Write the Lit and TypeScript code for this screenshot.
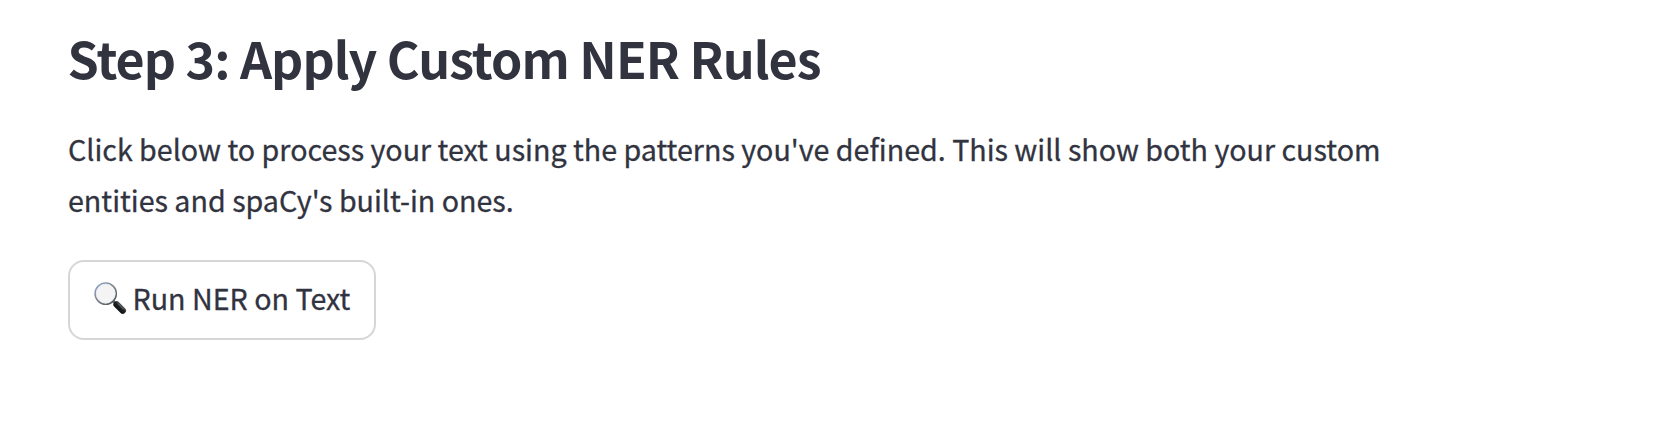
import { LitElement, html, css } from "lit";
import { customElement } from "lit/decorators.js";

@customElement("app-root")
class AppRoot extends LitElement {
  static styles = css`
    :host {
      display: block;
      box-sizing: border-box;
      height: 434px;
      padding: 21px 68px 0;
      background: #fff;
      color: #31333f;
      font-family: "Noto Sans CJK SC", sans-serif;
    }
    .title {
      margin: 0 0 0 -0.4px;
      font-size: 50.14px;
      font-weight: 700;
      line-height: 72px;
      letter-spacing: -0.95px;
      white-space: nowrap;
    }
    .intro {
      margin: 30px 0 0;
      font-size: 28.65px;
      line-height: 51px;
      white-space: nowrap;
      font-variant-ligatures: none;
      -webkit-text-stroke: 0.3px #31333f;
    }
    .run {
      display: flex;
      align-items: center;
      box-sizing: border-box;
      width: 308px;
      height: 80px;
      margin: 35px 0 0;
      padding: 0 24px 6px;
      border: 2px solid #d6d6d9;
      border-radius: 16px;
      background: #fff;
      color: inherit;
      font: 28.65px "Noto Sans CJK SC", sans-serif;
      -webkit-text-stroke: 0.3px #31333f;
      white-space: nowrap;
    }
    .icon {
      flex: none;
      width: 40px;
      height: 40px;
      margin: 2px 2.5px 0 -4px;
    }
  `;
  render() {
    return html`<h2 class="title">Step 3: Apply Custom NER Rules</h2>
      <p class="intro">Click below to process your text using the patterns you've defined. This will show both your custom<br />entities and spaCy's built-in ones.</p>
      <button class="run">
        <svg class="icon" viewBox="0 0 40 40" fill="none" aria-hidden="true">
          <defs>
            <linearGradient id="rim" x1="6" y1="5" x2="24" y2="26" gradientUnits="userSpaceOnUse">
              <stop stop-color="#8fa9cc" />
              <stop offset="0.5" stop-color="#7d838c" />
              <stop offset="1" stop-color="#50545a" />
            </linearGradient>
            <linearGradient id="grip" x1="26" y1="32" x2="32" y2="26" gradientUnits="userSpaceOnUse">
              <stop stop-color="#0c0d0f" />
              <stop offset="0.6" stop-color="#202326" />
              <stop offset="1" stop-color="#666c70" />
            </linearGradient>
          </defs>
          <circle cx="15.7" cy="15.6" r="10.6" fill="#f4f4f5" stroke="url(#rim)" stroke-width="1.6" />
          <circle cx="15.7" cy="15.6" r="9.4" stroke="#e6eaee" stroke-width="0.8" />
          <path d="m22.8 22.8 3 3" stroke="#555a60" stroke-width="2.8" />
          <path d="m26.7 26.5 6 6" stroke="url(#grip)" stroke-width="6.6" stroke-linecap="round" />
          <path d="m28.2 25.8 5 5" stroke="#8a9094" stroke-width="0.7" stroke-linecap="round" />
        </svg>
        <span>Run NER on Text</span>
      </button>`;
  }
}
